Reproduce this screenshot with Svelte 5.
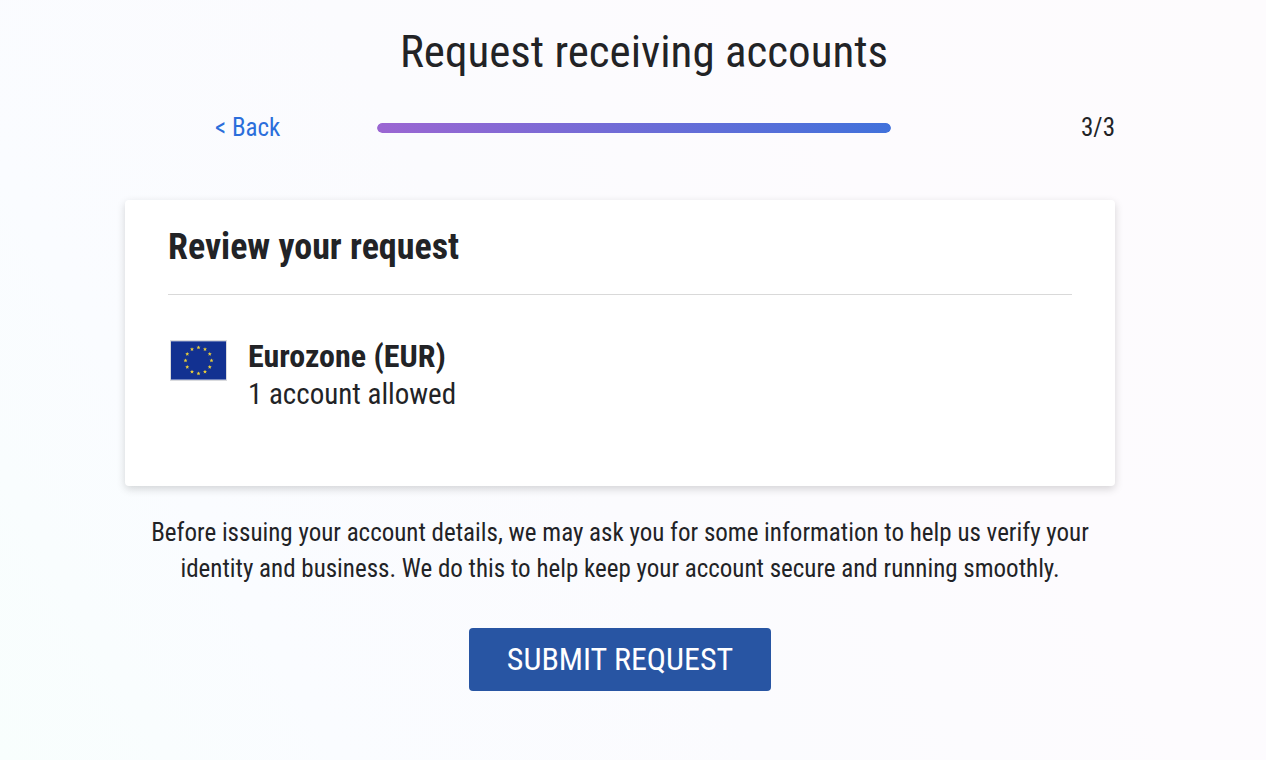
<script lang="ts">
	const step = 3;
	const totalSteps = 3;

	const accounts = [{ name: 'Eurozone (EUR)', allowed: '1 account allowed' }];

	const stars = Array.from({ length: 12 }, (_, i) => {
		const angle = (i * Math.PI) / 6;
		return { x: 28.5 + 13 * Math.sin(angle), y: 20.5 - 13 * Math.cos(angle) };
	});
</script>

<div class="page">
	<header>
		<h1>Request receiving accounts</h1>
	</header>

	<main>
		<nav class="steps">
			<a class="back" href="#back">&lt; Back</a>
			<div
				class="bar"
				role="progressbar"
				aria-label="Progress"
				aria-valuemin="0"
				aria-valuemax={totalSteps}
				aria-valuenow={step}
			>
				<div class="bar-fill" style="width: {(step / totalSteps) * 100}%"></div>
			</div>
			<span class="count">{step}/{totalSteps}</span>
		</nav>

		<section class="card">
			<h2>Review your request</h2>
			{#each accounts as account}
				<div class="account">
					<svg class="flag" viewBox="0 0 57 41" aria-hidden="true">
						<rect width="57" height="41" fill="#d9dadd" />
						<rect x="1" y="1" width="55" height="39" fill="#8d9cc9" />
						<rect x="1" y="1.6" width="55" height="37.6" fill="#123191" />
						{#each stars as star}
							<path
								transform="translate({star.x} {star.y})"
								d="M0-2.1 .6-.7H2L.9.3 1.3 1.8 0 1-1.3 1.8-.9.3-2-.7H-.6Z"
								fill="#e8cd3a"
							/>
						{/each}
					</svg>
					<div>
						<h3>{account.name}</h3>
						<p>{account.allowed}</p>
					</div>
				</div>
			{/each}
		</section>

		<p class="note">
			Before issuing your account details, we may ask you for some information to help us verify your
			identity and business. We do this to help keep your account secure and running smoothly.
		</p>

		<button type="button">SUBMIT REQUEST</button>
	</main>
</div>

<style>
	:global(body) {
		margin: 0;
	}

	.page {
		box-sizing: border-box;
		min-height: 100vh;
		padding: 20px 26px 68px 0;
		background: linear-gradient(60deg, #f8fefd 0%, #fafcff 20%, #fbfbfe 45%, #fdfbfe 70%, #fdfbfd 100%);
		color: #222326;
		font-family: 'Roboto Condensed', Roboto, sans-serif;
		font-size: 25px;
		line-height: 36px;
	}

	h1,
	h2,
	h3,
	p {
		margin: 0;
	}

	header {
		padding-left: 48px;
		text-align: center;
	}

	h1 {
		font-size: 45px;
		font-weight: 400;
		line-height: 64px;
	}

	main {
		display: flex;
		flex-direction: column;
		align-items: center;
		max-width: 990px;
		margin: 0 auto;
	}

	.steps {
		display: grid;
		grid-template-columns: 252px minmax(0, 514px) 1fr;
		align-items: center;
		width: 100%;
		margin-top: 25px;
		line-height: 38px;
	}

	.back {
		padding-left: 90px;
		color: #2b6edb;
		text-decoration: none;
	}

	.bar {
		height: 10px;
		border-radius: 5px;
		overflow: hidden;
	}

	.bar-fill {
		height: 100%;
		border-radius: 5px;
		background: linear-gradient(90deg, #9b66d2, #4171db);
	}

	.count {
		text-align: right;
	}

	.card {
		box-sizing: border-box;
		width: 100%;
		min-height: 286px;
		margin-top: 53px;
		padding: 24px 43px;
		border-radius: 4px;
		background: #fff;
		box-shadow: 0 3px 8px rgba(0, 0, 0, 0.16);
	}

	h2 {
		padding-bottom: 24px;
		border-bottom: 1px solid #d9d9d9;
		font-size: 36px;
		font-weight: 700;
		line-height: 46px;
	}

	.account {
		display: flex;
		gap: 21px;
		margin-top: 42px;
		padding-left: 2px;
	}

	.flag {
		width: 57px;
		height: 41px;
		margin-top: 3px;
	}

	h3 {
		font-size: 32px;
		font-weight: 700;
		line-height: 38px;
	}

	.account p {
		font-size: 29px;
		line-height: 38px;
	}

	.note {
		margin-top: 29px;
		text-align: center;
	}

	button {
		margin-top: 41px;
		padding: 0 38px;
		border: 0;
		border-radius: 4px;
		background: #2855a3;
		color: #fff;
		font-family: inherit;
		font-size: 32px;
		line-height: 63px;
		cursor: pointer;
	}
</style>
